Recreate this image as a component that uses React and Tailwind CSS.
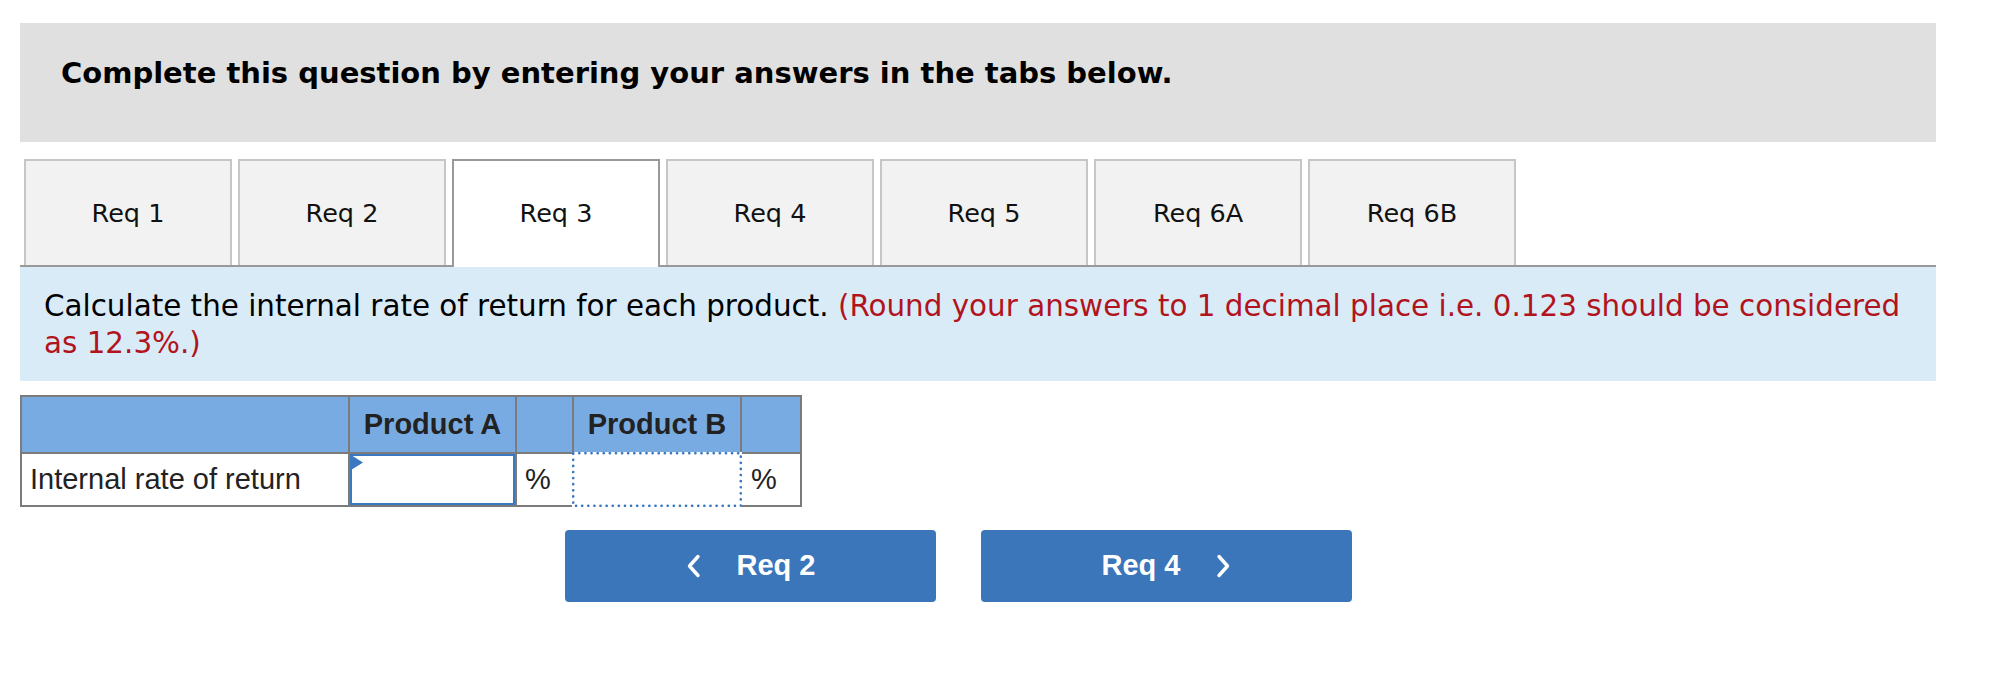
import React from "react";

const tabs = ["Req 1", "Req 2", "Req 3", "Req 4", "Req 5", "Req 6A", "Req 6B"];

function ChevronLeft() {
  return (
    <svg width="15" height="24" viewBox="0 0 15 24" fill="none">
      <polyline points="12,2.5 3.5,12 12,21.5" stroke="white" strokeWidth="3.4" strokeLinecap="round" strokeLinejoin="round" />
    </svg>
  );
}

function ChevronRight() {
  return (
    <svg width="15" height="24" viewBox="0 0 15 24" fill="none">
      <polyline points="3,2.5 11.5,12 3,21.5" stroke="white" strokeWidth="3.4" strokeLinecap="round" strokeLinejoin="round" />
    </svg>
  );
}

export default function App() {
  return (
    <div className="min-h-[684px] w-full bg-white">
      <div className="ml-[20px] w-[1916px] pt-[23px]">
        {/* Header bar */}
        <div className="h-[119px] bg-[#e0e0e0] pl-[41px] pt-[32px]">
          <h1 className="font-['DejaVu_Sans',sans-serif] text-[29px] font-bold leading-[36px] text-black">
            Complete this question by entering your answers in the tabs below.
          </h1>
        </div>

        {/* Tabs */}
        <div className="mt-[17px] flex items-start gap-[6px] border-b-2 border-[#999999] pl-[4px]">
          {tabs.map((t) =>
            t === "Req 3" ? (
              <div
                key={t}
                className="relative z-10 -mb-[2px] flex h-[108px] w-[208px] items-center justify-center border-2 border-b-0 border-[#999999] bg-white pb-[2px] font-['DejaVu_Sans',sans-serif] text-[25.5px] text-[#111111]"
              >
                {t}
              </div>
            ) : (
              <div
                key={t}
                className="flex h-[106px] w-[208px] items-center justify-center border-2 border-b-0 border-[#c6c6c6] bg-[#f2f2f2] font-['DejaVu_Sans',sans-serif] text-[25.5px] text-[#111111]"
              >
                {t}
              </div>
            )
          )}
        </div>

        {/* Instruction panel */}
        <div className="bg-[#daebf8] pb-[20px] pl-[24px] pr-[24px] pt-[21px]">
          <p className="font-['DejaVu_Sans',sans-serif] text-[29.4px] leading-[36.5px] text-black">
            Calculate the internal rate of return for each product.{" "}
            <span className="text-[#b1141c]">
              (Round your answers to 1 decimal place i.e. 0.123 should be considered as 12.3%.)
            </span>
          </p>
        </div>

        {/* Table */}
        <div className="mt-[14px] w-[782px] border-2 border-[#7b7b7b] font-['Liberation_Sans',Arial,sans-serif]">
          <div className="grid grid-cols-[328px_167px_57px_168px_58px]">
            {/* header row */}
            <div className="h-[57px] border-b-2 border-r-2 border-[#7b7b7b] bg-[#79abe3]" />
            <div className="flex h-[57px] items-center justify-center border-b-2 border-r-2 border-[#7b7b7b] bg-[#79abe3] text-[29px] font-bold text-[#222222]">
              Product A
            </div>
            <div className="h-[57px] border-b-2 border-r-2 border-[#7b7b7b] bg-[#79abe3]" />
            <div className="flex h-[57px] items-center justify-center border-b-2 border-r-2 border-[#7b7b7b] bg-[#79abe3] text-[29px] font-bold text-[#222222]">
              Product B
            </div>
            <div className="h-[57px] border-b-2 border-[#7b7b7b] bg-[#79abe3]" />

            {/* body row */}
            <div className="flex h-[51px] items-center border-r-2 border-[#7b7b7b] pl-[8px] text-[29px] text-[#222222]">
              Internal rate of return
            </div>
            <div className="relative h-[51px] border-r-2 border-[#7b7b7b]">
              <div className="h-full w-[165px] border-2 border-[#3b78c0] bg-white" />
              <svg className="absolute left-[1px] top-[1px]" width="12" height="15" viewBox="0 0 12 15">
                <polygon points="0,0 12,7.5 0,15" fill="#3b78c0" />
              </svg>
            </div>
            <div className="flex h-[51px] items-center border-r-2 border-[#7b7b7b] pl-[8px] text-[29px] text-[#222222]">
              %
            </div>
            <div className="relative h-[51px] border-r-2 border-[#7b7b7b] bg-white">
              <svg className="absolute -left-[2px] -top-[2px]" width="170" height="55" viewBox="0 0 170 55">
                <rect x="1" y="1" width="168" height="53" fill="white" stroke="white" strokeWidth="2" />
                <rect
                  x="1.2"
                  y="1.2"
                  width="167.6"
                  height="52.6"
                  fill="none"
                  stroke="#3b78c0"
                  strokeWidth="2.7"
                  strokeDasharray="0.01 6.1"
                  strokeLinecap="round"
                />
              </svg>
            </div>
            <div className="flex h-[51px] items-center pl-[9px] text-[29px] text-[#222222]">%</div>
          </div>
        </div>

        {/* Nav buttons */}
        <div className="mt-[23px] flex gap-[45px] pl-[545px] font-['Liberation_Sans',Arial,sans-serif]">
          <button className="flex h-[72px] w-[371px] items-center justify-center gap-[36px] rounded-[4px] bg-[#3b76bb] text-[29px] font-bold text-white">
            <ChevronLeft />
            <span>Req 2</span>
          </button>
          <button className="flex h-[72px] w-[371px] items-center justify-center gap-[36px] rounded-[4px] bg-[#3b76bb] text-[29px] font-bold text-white">
            <span>Req 4</span>
            <ChevronRight />
          </button>
        </div>
      </div>
    </div>
  );
}
